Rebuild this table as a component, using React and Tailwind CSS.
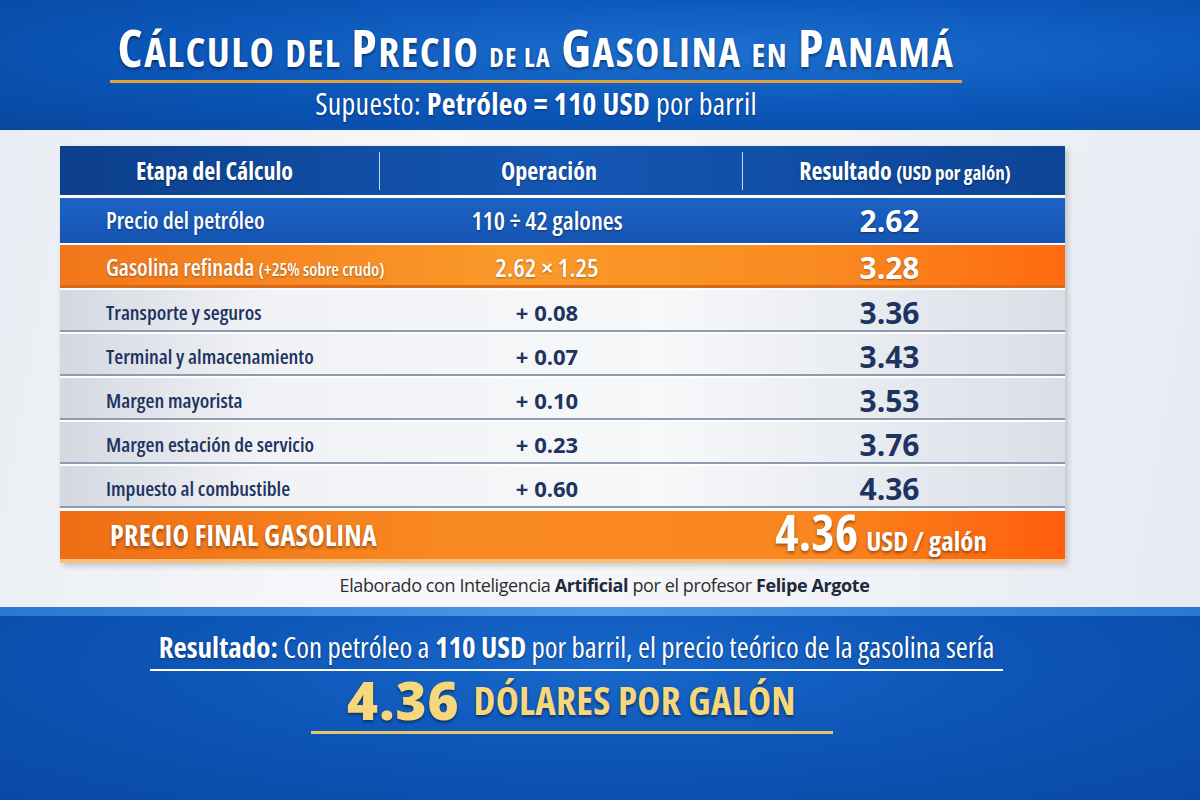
const rows = [
  { label: 'Transporte y seguros', op: '+ 0.08', res: '3.36' },
  { label: 'Terminal y almacenamiento', op: '+ 0.07', res: '3.43' },
  { label: 'Margen mayorista', op: '+ 0.10', res: '3.53' },
  { label: 'Margen estación de servicio', op: '+ 0.23', res: '3.76' },
  { label: 'Impuesto al combustible', op: '+ 0.60', res: '4.36' },
];

function Big({ a, b }) {
  return (
    <span>
      <span className="text-[52px]">{a}</span>
      <span className="text-[41px]">{b}</span>
    </span>
  );
}

export default function App() {
  return (
    <div className="w-[1200px] h-[800px] overflow-hidden flex flex-col font-['Open_Sans',sans-serif] font-stretch-condensed">
      {/* Top band */}
      <div className="h-[130px] shrink-0 bg-[radial-gradient(ellipse_at_60%_40%,#1d6fd0_0%,#0b56b8_55%,#08479f_100%)] flex">
        <div className="ml-[110px] w-[852px] flex flex-col items-center">
          <div className="mt-[19px] w-full h-[64px] flex justify-center items-baseline gap-[10px] border-b-[3px] border-[#e0a33a] leading-[56px] font-bold text-white whitespace-nowrap tracking-[1.5px] [text-shadow:0_2px_3px_rgba(0,0,0,0.45)]">
            <Big a="C" b="ÁLCULO" />
            <span className="text-[37px]">DEL</span>
            <Big a="P" b="RECIO" />
            <span className="text-[26px]">DE LA</span>
            <Big a="G" b="ASOLINA" />
            <span className="text-[32px]">EN</span>
            <Big a="P" b="ANAMÁ" />
          </div>
          <div className="mt-[3px] text-[30px] leading-[36px] tracking-[0.3px] text-white whitespace-nowrap [text-shadow:0_1px_2px_rgba(0,0,0,0.4)]">
            Supuesto: <span className="font-bold">Petróleo = 110 USD</span> por barril
          </div>
        </div>
      </div>

      {/* Middle light band */}
      <div className="h-[477px] shrink-0 bg-[linear-gradient(100deg,#e9edf3_0%,#f7f8fb_35%,#f2f4f8_65%,#e6ebf2_100%)] flex flex-col">
        <div className="mt-[16px] ml-[60px] w-[1005px] flex flex-col gap-[3px] bg-white shadow-[3px_3px_6px_rgba(0,0,0,0.18)]">
          {/* header */}
          <div className="h-[49px] grid grid-cols-[320px_363px_1fr] items-center bg-[linear-gradient(90deg,#0c3f8c_0%,#1457b4_50%,#0d4497_100%)] text-white font-bold text-[24px] [text-shadow:0_1px_2px_rgba(0,0,0,0.4)]">
            <div className="text-center pr-[10px] border-r border-[#c9d6ea] h-[38px] flex items-center justify-center">Etapa del Cálculo</div>
            <div className="text-center pr-[24px] border-r border-[#c9d6ea] h-[38px] flex items-center justify-center">Operación</div>
            <div className="text-center pl-[2px] whitespace-nowrap">
              Resultado <span className="text-[19px]">(USD por galón)</span>
            </div>
          </div>
          {/* row 1 blue */}
          <div className="h-[45px] grid grid-cols-[320px_334px_1fr] items-center bg-[linear-gradient(180deg,#1c62c4_0%,#1554b2_100%)] text-white [text-shadow:0_1px_2px_rgba(0,0,0,0.4)]">
            <div className="pl-[46px] text-[23px] font-semibold">Precio del petróleo</div>
            <div className="text-center text-[25px] font-semibold">110 ÷ 42 galones</div>
            <div className="text-center text-[30px] font-bold font-stretch-normal">2.62</div>
          </div>
          {/* row 2 orange */}
          <div className="h-[43px] -mt-[1px] grid grid-cols-[320px_334px_1fr] items-center bg-[linear-gradient(90deg,#f2761a_0%,#fb9a2a_45%,#f98b21_75%,#ff6a10_100%)] text-white [text-shadow:0_1px_2px_rgba(0,0,0,0.35)] border-b-[3px] border-[#d86a17]">
            <div className="pl-[46px] text-[23px] font-semibold whitespace-nowrap">
              Gasolina refinada <span className="text-[17.5px]">(+25% sobre crudo)</span>
            </div>
            <div className="text-center text-[26px] font-semibold">2.62 × 1.25</div>
            <div className="text-center text-[30px] font-bold font-stretch-normal">3.28</div>
          </div>
          {/* gray rows */}
          {rows.map((r) => (
            <div
              key={r.label}
              className="h-[42px] -mt-[1px] grid grid-cols-[320px_334px_1fr] items-center bg-[linear-gradient(90deg,#d3d8e1_0%,#f1f2f5_20%,#f7f8fa_60%,#dadfe7_100%)] text-[#1d3461] border-b-[2px] border-[#8e9ab0]"
            >
              <div className="pl-[46px] text-[20.5px] font-semibold whitespace-nowrap">{r.label}</div>
              <div className="text-center text-[22px] font-bold font-stretch-normal">{r.op}</div>
              <div className="text-center text-[30px] font-bold font-stretch-normal">{r.res}</div>
            </div>
          ))}
          {/* final */}
          <div className="h-[52px] flex items-center justify-between bg-[linear-gradient(90deg,#ef6d14_0%,#f98a21_40%,#f9861f_75%,#ff5e0c_100%)] text-white font-bold [text-shadow:0_2px_3px_rgba(0,0,0,0.4)] border-b-[4px] border-[#f3c27a]">
            <div className="pl-[50px] text-[28px] tracking-[0.3px]">PRECIO FINAL GASOLINA</div>
            <div className="pr-[78px] flex items-baseline gap-[8px]">
              <span className="text-[50px] leading-[46px]">4.36</span>
              <span className="text-[27px]">USD / galón</span>
            </div>
          </div>
        </div>
        <div className="mt-[9px] ml-[60px] pl-[84px] w-[1005px] text-center text-[18px] text-[#2d2d2d] font-stretch-normal tracking-[-0.4px]">
          Elaborado con Inteligencia <span className="font-bold text-[#1e2a3a]">Artificial</span> por el profesor{' '}
          <span className="font-bold text-[#1e2a3a]">Felipe Argote</span>
        </div>
      </div>

      {/* bottom blue */}
      <div className="flex-1 flex flex-col bg-[radial-gradient(ellipse_at_50%_30%,#1868cc_0%,#0d55b6_50%,#0a49a6_100%)]">
        <div className="h-[9px] bg-[linear-gradient(90deg,#2a78d0_0%,#4f9ae6_50%,#2a78d0_100%)]" />
        <div className="ml-[150px] w-[853px] flex flex-col items-center">
          <div className="mt-[14px] pb-[5px] w-full text-center border-b-2 border-white text-[29px] leading-[34px] text-white whitespace-nowrap [text-shadow:0_1px_2px_rgba(0,0,0,0.45)]">
            <span className="font-bold">Resultado:</span> Con petróleo a <span className="font-bold">110 USD</span> por barril, el precio teórico de la gasolina sería
          </div>
          <div className="mt-[2px] -ml-[10px] w-[522px] h-[61px] pb-[4px] flex justify-center items-center gap-[14px] border-b-[3px] border-[#e9c56a] font-bold text-[#f6d77c] [text-shadow:0_2px_3px_rgba(0,0,0,0.45)]">
            <span className="text-[53px] leading-[50px] font-extrabold font-stretch-normal tracking-[1px]">4.36</span>
            <span className="text-[39px] leading-[50px] tracking-[0.3px]">DÓLARES POR GALÓN</span>
          </div>
        </div>
      </div>
    </div>
  );
}
